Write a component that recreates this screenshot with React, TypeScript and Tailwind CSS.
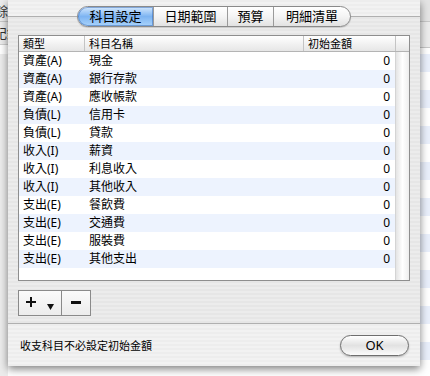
import React from 'react';

const font = "font-['Noto_Sans','Noto_Sans_CJK_TC',sans-serif]";

const rows: [string, string][] = [
  ['資產(A)', '現金'],
  ['資產(A)', '銀行存款'],
  ['資產(A)', '應收帳款'],
  ['負債(L)', '信用卡'],
  ['負債(L)', '貸款'],
  ['收入(I)', '薪資'],
  ['收入(I)', '利息收入'],
  ['收入(I)', '其他收入'],
  ['支出(E)', '餐飲費'],
  ['支出(E)', '交通費'],
  ['支出(E)', '服裝費'],
  ['支出(E)', '其他支出'],
];

const tabs = [
  { label: '科目設定', w: 'w-[75px]', active: true },
  { label: '日期範圍', w: 'w-[74px]' },
  { label: '預算', w: 'w-[46px]' },
  { label: '明細清單', w: 'w-[77px]' },
];

function Tabs() {
  return (
    <div className="flex justify-center -mt-[11px]">
      <div className="flex h-[21px] rounded-[11px] border border-[#8a8a8a] bg-gradient-to-b from-white via-[#f4f4f4] to-[#e2e2e2] shadow-[0_1px_1px_rgba(0,0,0,0.15)]">
        {tabs.map((t, i) => (
          <div
            key={t.label}
            className={[
              t.w,
              'flex items-center justify-center text-[13px] leading-none text-black',
              i > 0 ? 'border-l border-[#9a9a9a]' : '',
              i === 0 ? 'rounded-l-[10px]' : '',
              i === tabs.length - 1 ? 'rounded-r-[10px]' : '',
              t.active
                ? 'bg-gradient-to-b from-[#d4e8fc] via-[#7db4f2] to-[#a9d3fb] shadow-[inset_0_0_0_1px_rgba(40,90,170,0.45)]'
                : '',
            ].join(' ')}
          >
            {t.label}
          </div>
        ))}
      </div>
    </div>
  );
}

function Table() {
  return (
    <div className="flex flex-col h-[246px] border border-[#8e8e8e] bg-white">
      {/* Header */}
      <div className="flex h-[16px] shrink-0 border-b border-[#b4b4b4] bg-gradient-to-b from-white to-[#e6e6e6] text-[11px] leading-[15px] text-black">
        <div className="w-[65px] pl-[4px]">類型</div>
        <div className="w-[219px] pl-[4px] border-l border-[#c4c4c4]">科目名稱</div>
        <div className="w-[92px] pl-[4px] border-l border-[#c4c4c4]">初始金額</div>
        <div className="flex-1 border-l border-[#c4c4c4]" />
      </div>
      {/* Body */}
      <div className="flex flex-1">
        <div className="w-[376px] flex flex-col">
          {rows.map(([type, name], i) => (
            <div
              key={name}
              className={[
                'flex h-[18px] items-center text-[12px] leading-none text-black',
                i % 2 === 1 ? 'bg-[#edf3fe]' : 'bg-white',
              ].join(' ')}
            >
              <div className="w-[65px] pl-[4px]">{type}</div>
              <div className="w-[219px] pl-[5px]">{name}</div>
              <div className="flex-1 pr-[5px] text-right">0</div>
            </div>
          ))}
        </div>
        <div className="flex-1 border-l border-[#d4d4d4] bg-gradient-to-r from-[#e4e4e4] via-white to-[#eeeeee]" />
      </div>
    </div>
  );
}

function AddRemove() {
  return (
    <div className="flex mt-[9px]">
      <div className="relative w-[44px] h-[26px] border border-[#8a8a8a] bg-gradient-to-b from-[#fafafa] to-[#ececec] flex items-start">
        <svg width="10" height="10" viewBox="0 0 10 10" className="ml-[7px] mt-[6px]">
          <path d="M4 0h2v4h4v2H6v4H4V6H0V4h4z" fill="#111" />
        </svg>
        <svg width="7" height="6" viewBox="0 0 7 6" className="ml-[11px] mt-[13px]">
          <path d="M0 0h7L3.5 6z" fill="#111" />
        </svg>
      </div>
      <div className="w-[29px] h-[26px] border border-l-0 border-[#8a8a8a] bg-gradient-to-b from-[#fafafa] to-[#ececec] flex items-start justify-center">
        <svg width="10" height="3" viewBox="0 0 10 3" className="mt-[10px]">
          <rect width="10" height="3" fill="#111" />
        </svg>
      </div>
    </div>
  );
}

export default function App() {
  return (
    <div
      className={`${font} w-[430px] h-[376px] overflow-hidden flex bg-[repeating-linear-gradient(180deg,#ffffff_0px,#ffffff_18px,#e9effb_18px,#e9effb_36px)]`}
    >
      {/* Background window, left edge */}
      <div className="w-[8px] shrink-0 flex flex-col overflow-hidden bg-[#ececec]">
        <div className="h-[22px] -ml-[5px] text-[13px] leading-[22px] text-[#333] border-b border-[#c8c8c8] whitespace-nowrap">餘</div>
        <div className="h-[22px] -ml-[6px] text-[13px] leading-[22px] text-[#333] whitespace-nowrap">記錄</div>
        <div className="h-[10px] border-t border-[#d0d0d0] bg-white" />
      </div>

      {/* Sheet */}
      <div className="w-[412px] h-[366px] shrink-0 flex flex-col bg-[repeating-linear-gradient(180deg,#ededed_0px,#ededed_2px,#f2f2f2_2px,#f2f2f2_4px)] shadow-[0_3px_8px_rgba(0,0,0,0.5)] z-10">
        <div className="mt-[16px] h-[308px] border-t border-b border-[#b0b0b0] bg-[repeating-linear-gradient(180deg,#e6e6e6_0px,#e6e6e6_2px,#ececec_2px,#ececec_4px)] px-[10px]">
          <Tabs />
          <div className="mt-[8px]">
            <Table />
          </div>
          <AddRemove />
        </div>
        <div className="flex-1 flex items-center justify-between pl-[12px] pr-[11px]">
          <span className="text-[11px] text-black mt-[3px]">收支科目不必設定初始金額</span>
          <button className="w-[69px] h-[21px] rounded-full border border-[#6e6e6e] bg-gradient-to-b from-white via-[#e2e2e2] to-[#fbfbfb] text-[13px] leading-none text-black shadow-[0_1px_2px_rgba(0,0,0,0.25)]">
            OK
          </button>
        </div>
      </div>

      {/* Background window, right edge */}
      <div className="flex-1 flex flex-col">
        <div className="h-[22px] bg-[#e4e4e4] border-b border-[#c8c8c8]" />
        <div className="h-[26px] bg-[#ececec] border-b border-[#c8c8c8]" />
      </div>
    </div>
  );
}
